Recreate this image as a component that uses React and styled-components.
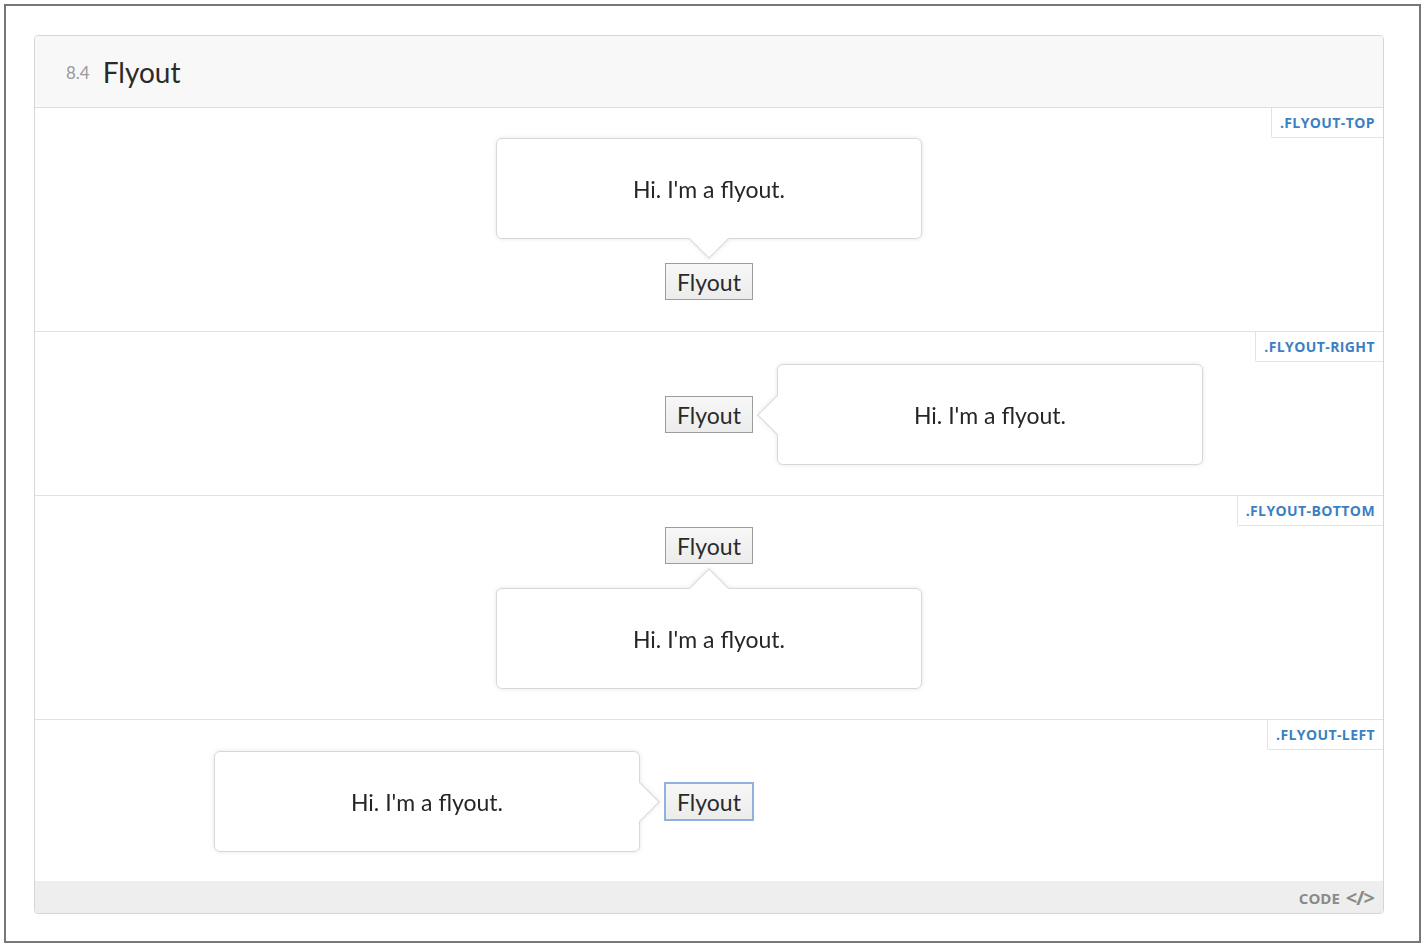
import React from 'react'
import styled, { createGlobalStyle, css } from 'styled-components'

const Global = createGlobalStyle`
  html, body { margin: 0; padding: 0; background: #fff; }
  body { font-family: "Lato", "Open Sans", sans-serif; color: #333; }
`

const Frame = styled.div`
  margin: 4px;
  width: 1417px;
  height: 939px;
  border: 2px solid #777;
  padding: 29px 0 0 28px;
  box-sizing: border-box;
`

const Card = styled.div`
  width: 1350px;
  border: 1px solid #d6d6d6;
  border-radius: 4px;
  overflow: hidden;
  box-sizing: border-box;
`

const Header = styled.div`
  height: 72px;
  display: flex;
  align-items: center;
  gap: 13px;
  padding: 0 0 0 31px;
  background: #f8f8f8;
  border-bottom: 1px solid #ddd;
  box-sizing: border-box;
`

const Num = styled.span`
  font-size: 17px;
  color: #9a9a9a;
  margin-top: 2px;
`

const Title = styled.h2`
  margin: 0;
  font-weight: 400;
  font-size: 28px;
  color: #2a2a2a;
`

const Section = styled.div`
  position: relative;
  border-bottom: ${p => (p.$last ? 'none' : '1px solid #e2e2e2')};
  padding: ${p => p.$pad || '30px 0 31px'};
  display: ${p => (p.$stack ? 'flex' : 'grid')};
  flex-direction: column;
  align-items: center;
  grid-template-columns: 1fr auto 1fr;
  gap: 24px;
`

const Tag = styled.div`
  position: absolute;
  top: 0;
  right: 0;
  height: 30px;
  padding: 0 8px 0 8px;
  display: flex;
  align-items: center;
  background: #fff;
  border-left: 1px solid #e3e3e3;
  border-bottom: 1px solid #e3e3e3;
  border-bottom-left-radius: 2px;
  font-family: "Open Sans", sans-serif;
  font-weight: 700;
  font-size: 14px;
  letter-spacing: 0.4px;
  color: #3b80c3;
  box-sizing: border-box;
`

const arrowFor = {
  top: css`
    left: 50%;
    bottom: -15px;
    transform: translateX(-50%) rotate(45deg);
    border-right: 1px solid #d8d8d8;
    border-bottom: 1px solid #d8d8d8;
  `,
  bottom: css`
    left: 50%;
    top: -15px;
    transform: translateX(-50%) rotate(45deg);
    border-left: 1px solid #d8d8d8;
    border-top: 1px solid #d8d8d8;
  `,
  right: css`
    top: 50%;
    left: -15px;
    transform: translateY(-50%) rotate(45deg);
    border-left: 1px solid #d8d8d8;
    border-bottom: 1px solid #d8d8d8;
  `,
  left: css`
    top: 50%;
    right: -15px;
    transform: translateY(-50%) rotate(45deg);
    border-right: 1px solid #d8d8d8;
    border-top: 1px solid #d8d8d8;
  `,
}

const Flyout = styled.div`
  position: relative;
  width: 426px;
  height: 101px;
  display: flex;
  align-items: center;
  justify-content: center;
  background: #fff;
  border: 1px solid #d8d8d8;
  border-radius: 6px;
  box-sizing: border-box;
  font-size: 23px;
  color: #262626;
  filter: drop-shadow(0 0 2px rgba(0, 0, 0, 0.1));
  justify-self: ${p => (p.$side === 'left' ? 'end' : p.$side === 'right' ? 'start' : 'auto')};

  &::after {
    content: '';
    position: absolute;
    width: 28px;
    height: 28px;
    background: #fff;
    box-sizing: border-box;
    ${p => arrowFor[p.$side]}
  }
`

const Button = styled.button`
  width: ${p => (p.$focus ? '90px' : '88px')};
  height: ${p => (p.$focus ? '39px' : '37px')};
  padding: 0;
  font-family: "Lato", "Open Sans", sans-serif;
  font-size: 23px;
  color: #2a2a2a;
  background: linear-gradient(#f7f7f7, #ececec);
  border: ${p => (p.$focus ? '2px solid #8fb2dc' : '1px solid #9d9d9d')};
  border-radius: 0;
  box-sizing: border-box;
  outline: none;
`

const Spacer = styled.div``

const Footer = styled.div`
  height: 32px;
  background: #efeeee;
  display: flex;
  align-items: center;
  justify-content: flex-end;
  gap: 6px;
  padding-right: 9px;
  font-family: "Open Sans", sans-serif;
  font-weight: 700;
  color: #8a8a8a;
`

const CodeLabel = styled.span`
  font-size: 15px;
  margin-top: 2px;
`

const CodeIcon = styled.span`
  font-size: 20px;
  letter-spacing: -1px;
`

export default function App() {
  return (
    <>
      <Global />
      <Frame>
        <Card>
          <Header>
            <Num>8.4</Num>
            <Title>Flyout</Title>
          </Header>

          <Section $stack $pad="30px 0 31px">
            <Tag>.FLYOUT-TOP</Tag>
            <Flyout $side="top">Hi. I'm a flyout.</Flyout>
            <Button>Flyout</Button>
          </Section>

          <Section $pad="32px 0 30px">
            <Tag>.FLYOUT-RIGHT</Tag>
            <Spacer />
            <Button>Flyout</Button>
            <Flyout $side="right">Hi. I'm a flyout.</Flyout>
          </Section>

          <Section $stack $pad="31px 0 30px">
            <Tag>.FLYOUT-BOTTOM</Tag>
            <Button>Flyout</Button>
            <Flyout $side="bottom">Hi. I'm a flyout.</Flyout>
          </Section>

          <Section $last $pad="31px 0 29px">
            <Tag>.FLYOUT-LEFT</Tag>
            <Flyout $side="left">Hi. I'm a flyout.</Flyout>
            <Button $focus>Flyout</Button>
            <Spacer />
          </Section>

          <Footer>
            <CodeLabel>CODE</CodeLabel>
            <CodeIcon>&lt;/&gt;</CodeIcon>
          </Footer>
        </Card>
      </Frame>
    </>
  )
}
